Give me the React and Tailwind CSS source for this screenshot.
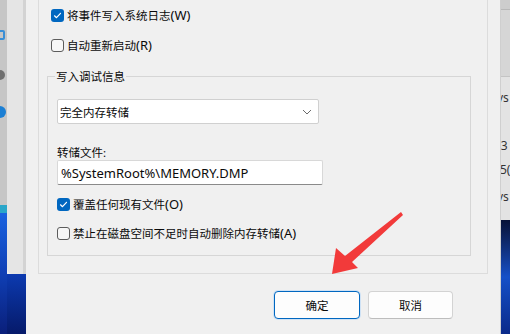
import React from "react";

const FONT = {
  fontFamily: '"Noto Sans", "Noto Sans CJK SC", sans-serif',
};

// mixed label: CJK part + latin suffix
function Label({ zh, en }) {
  return (
    <span className="whitespace-nowrap leading-[16px] text-[#0a0a0a]">
      <span className="text-[11.5px]">{zh}</span>
      {en && <span className="text-[13px]">{en}</span>}
    </span>
  );
}

function Check({ checked, zh, en }) {
  return (
    <div className="flex h-[16px] items-center gap-[3px]">
      {checked ? (
        <span className="flex h-[13px] w-[13px] items-center justify-center rounded-[3px] bg-[#0067c0]">
          <svg width="9" height="9" viewBox="0 0 9 9" fill="none">
            <path d="M1.5 4.8 L3.5 6.7 L7.5 2.3" stroke="#fff" strokeWidth="1.2" strokeLinecap="round" strokeLinejoin="round" />
          </svg>
        </span>
      ) : (
        <span className="h-[13px] w-[13px] rounded-[3px] border border-[#5c5c5c] bg-[#f7f7f7]" />
      )}
      <Label zh={zh} en={en} />
    </div>
  );
}

function LeftStrip() {
  return (
    <div className="flex w-[26px] shrink-0">
      <div className="flex w-[7px] flex-col">
        <div className="relative h-[205px] overflow-hidden bg-[#c6c6c6]">
          <span className="absolute left-[-5px] top-[30px] h-[10px] w-[10px] rounded-[2px] border-2 border-[#3a8fd6]" />
          <span className="absolute left-[-5px] top-[70px] h-[10px] w-[10px] rounded-full bg-[#6f6f6f]" />
          <span className="absolute left-[-6px] top-[106px] h-[12px] w-[12px] rounded-full bg-[#1b7fd4]" />
        </div>
        <div className="h-[8px] bg-[#2aa6c9]" />
        <div className="flex-1 bg-gradient-to-b from-[#1a62e0] via-[#0f3fb5] to-[#0a1f7a]" />
      </div>
      <div className="flex w-[19px] flex-col">
        <div className="h-[274px] rounded-bl-[6px] border-r-[3px] border-[#d3d3d3] bg-[#e5e5e5]" />
        <div className="flex-1 bg-gradient-to-b from-[#0c3ab0] to-[#061a6a]" />
      </div>
    </div>
  );
}

function RightStrip() {
  return (
    <div className="flex w-[10px] shrink-0 flex-col border-l border-[#cfcfcf]">
      <div className="h-[10px] border-b border-[#b8b8b8] bg-[#cdcdcd]" />
      <div className="h-[67px] border-b border-[#c4c4c4] bg-[#d6d6d6]" />
      <div className="flex h-[143px] flex-col overflow-hidden bg-[#e3e3e3] text-[12px] leading-[16px] text-[#333]">
        <span className="ml-[-4px] mt-[13px]">vs</span>
        <span className="ml-[-3px] mt-[32px]">'3</span>
        <span className="ml-[-1px] mt-[8px]">5(</span>
        <span className="ml-[-4px] mt-[11px]">vs</span>
      </div>
      <div className="flex-1 bg-gradient-to-b from-[#071238] via-[#1650c8] to-[#0a2a8a]" />
    </div>
  );
}

export default function App() {
  return (
    <div
      className="relative flex h-[334px] w-[510px] overflow-hidden bg-[#f0f0f0]"
      style={FONT}
    >
      <LeftStrip />

      {/* dialog */}
      <div className="flex w-[474px] shrink-0 flex-col bg-[#f0f0f0]">
        {/* outer group (top edge is off screen) */}
        <div className="mx-[12px] flex h-[274px] flex-col border border-t-0 border-[#dcdcdc] pl-[12px] pt-[7px]">
          <Check checked zh="将事件写入系统日志" en="(W)" />
          <div className="mt-[14px]">
            <Check zh="自动重新启动" en="(R)" />
          </div>

          <fieldset className="mr-[16px] ml-[-4px] mt-[14px] flex h-[189px] flex-col border border-[#d6d6d6] px-[9px]">
            <legend className="ml-[-2px] px-[1px] leading-[16px]">
              <Label zh="写入调试信息" />
            </legend>

            <div className="mt-[14px] flex h-[25px] w-[262px] items-center justify-between rounded-[2px] border border-[#d0d0d0] bg-white pl-[2px] pr-[6px]">
              <Label zh="完全内存转储" />
              <svg width="10" height="6" viewBox="0 0 10 6" fill="none">
                <path d="M1 1 L5 5 L9 1" stroke="#6b6b6b" strokeWidth="1" />
              </svg>
            </div>

            <div className="mt-[20px] flex h-[16px] items-center">
              <Label zh="转储文件:" />
            </div>
            <div className="flex h-[25px] w-[266px] items-center rounded-[2px] border border-b-[#8a8a8a] border-[#d8d8d8] bg-white pl-[3px]">
              <span className="text-[13px] leading-[16px] text-[#0a0a0a]">
                %SystemRoot%\MEMORY.DMP
              </span>
            </div>

            <div className="mt-[11px]">
              <Check checked zh="覆盖任何现有文件" en="(O)" />
            </div>
            <div className="mt-[13px]">
              <Check zh="禁止在磁盘空间不足时自动删除内存转储" en="(A)" />
            </div>
          </fieldset>
        </div>

        {/* buttons */}
        <div className="mt-[17px] flex justify-end gap-[8px] pr-[47px]">
          <button className="flex h-[28px] w-[86px] items-center justify-center rounded-[4px] border border-[#0067c0] bg-[#fdfdfd] shadow-[0_0_0_1px_#cfe2f5]">
            <Label zh="确定" />
          </button>
          <button className="flex h-[28px] w-[85px] items-center justify-center rounded-[4px] border border-[#d3d3d3] border-b-[#bdbdbd] bg-[#fdfdfd]">
            <Label zh="取消" />
          </button>
        </div>
      </div>

      <RightStrip />

      {/* red annotation arrow */}
      <svg
        className="pointer-events-none absolute left-0 top-0"
        width="510"
        height="334"
        viewBox="0 0 510 334"
      >
        <polygon
          points="401,212 403,215 352,262 358,268 332,274 336,248 345,256"
          fill="#f23a3a"
        />
      </svg>
    </div>
  );
}
